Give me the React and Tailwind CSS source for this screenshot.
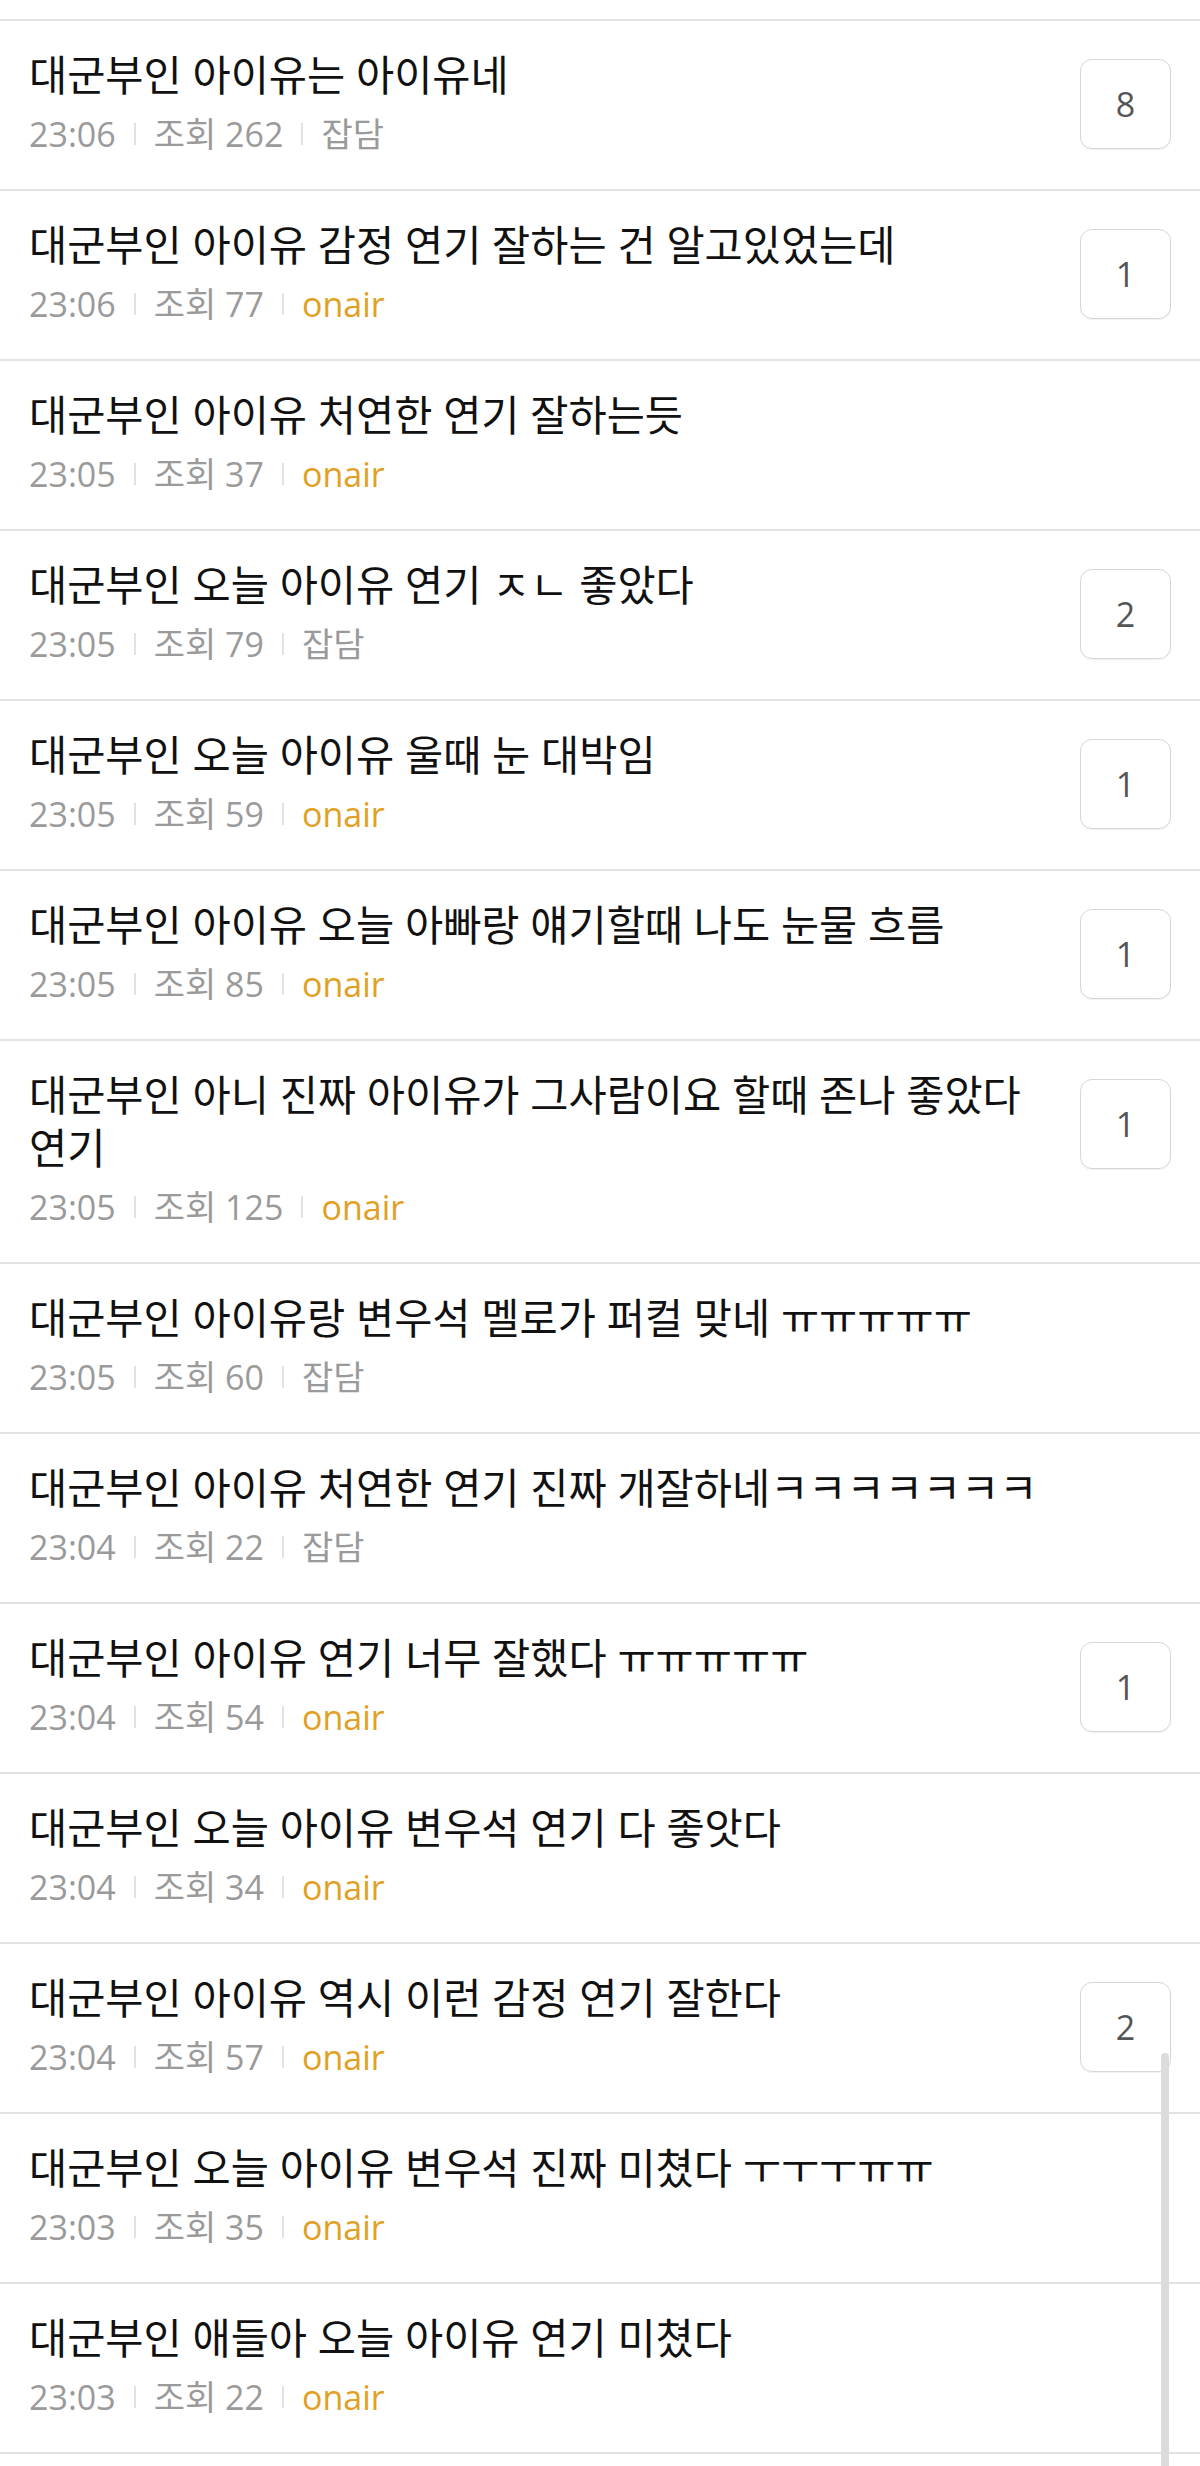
import React from "react";

const posts = [
  { title: "대군부인 아이유는 아이유네", time: "23:06", views: 262, cat: "잡담", count: 8 },
  { title: "대군부인 아이유 감정 연기 잘하는 건 알고있었는데", time: "23:06", views: 77, cat: "onair", count: 1 },
  { title: "대군부인 아이유 처연한 연기 잘하는듯", time: "23:05", views: 37, cat: "onair" },
  { title: "대군부인 오늘 아이유 연기 ㅈㄴ 좋았다", time: "23:05", views: 79, cat: "잡담", count: 2 },
  { title: "대군부인 오늘 아이유 울때 눈 대박임", time: "23:05", views: 59, cat: "onair", count: 1 },
  { title: "대군부인 아이유 오늘 아빠랑 얘기할때 나도 눈물 흐름", time: "23:05", views: 85, cat: "onair", count: 1 },
  { title: "대군부인 아니 진짜 아이유가 그사람이요 할때 존나 좋았다 연기", time: "23:05", views: 125, cat: "onair", count: 1 },
  { title: "대군부인 아이유랑 변우석 멜로가 퍼컬 맞네 ㅠㅠㅠㅠㅠ", time: "23:05", views: 60, cat: "잡담" },
  { title: "대군부인 아이유 처연한 연기 진짜 개잘하네ㅋㅋㅋㅋㅋㅋㅋ", time: "23:04", views: 22, cat: "잡담" },
  { title: "대군부인 아이유 연기 너무 잘했다 ㅠㅠㅠㅠㅠ", time: "23:04", views: 54, cat: "onair", count: 1 },
  { title: "대군부인 오늘 아이유 변우석 연기 다 좋앗다", time: "23:04", views: 34, cat: "onair" },
  { title: "대군부인 아이유 역시 이런 감정 연기 잘한다", time: "23:04", views: 57, cat: "onair", count: 2 },
  { title: "대군부인 오늘 아이유 변우석 진짜 미쳤다 ㅜㅜㅜㅠㅠ", time: "23:03", views: 35, cat: "onair" },
  { title: "대군부인 애들아 오늘 아이유 연기 미쳤다", time: "23:03", views: 22, cat: "onair" },
];

function Sep() {
  return <span className="mx-[18px] h-[22px] w-[2px] shrink-0 bg-[#e2e2e2]" />;
}

function PostRow({ post }) {
  return (
    <li className="flex items-start border-t-2 border-[#e3e3e3] pl-[29px] pr-[29px] pt-[28px] pb-[33px]">
      <div className="min-w-0 flex-1">
        <p className="text-[41.5px] leading-[53px] text-[#111]">{post.title}</p>
        <div className="mt-[10px] flex h-[44px] items-center text-[34px] leading-[44px] text-[#9a9a9a]">
          <span>{post.time}</span>
          <Sep />
          <span>조회 {post.views}</span>
          <Sep />
          <span className={post.cat === "onair" ? "text-[#e2a023]" : ""}>{post.cat}</span>
        </div>
      </div>
      {post.count != null && (
        <div className="mt-[10px] ml-[30px] flex h-[90px] w-[91px] shrink-0 items-center justify-center rounded-[12px] border-[1.5px] border-[#d6d6d6] text-[34px] text-[#555] shadow-[0_1px_1px_rgba(0,0,0,0.06)]">
          {post.count}
        </div>
      )}
    </li>
  );
}

export default function App() {
  return (
    <div
      className="relative h-[2466px] w-full overflow-hidden bg-white pt-[19px]"
      style={{ fontFamily: '"Open Sans", "Noto Sans CJK KR", sans-serif' }}
    >
      <ul className="border-b-2 border-[#e3e3e3]">
        {posts.map((p, i) => (
          <PostRow key={i} post={p} />
        ))}
      </ul>
      {/* scrollbar thumb */}
      <div className="absolute left-[1161px] top-[2053px] h-[413px] w-[8px] rounded-t-full bg-[#dcdcdc]" />
    </div>
  );
}
